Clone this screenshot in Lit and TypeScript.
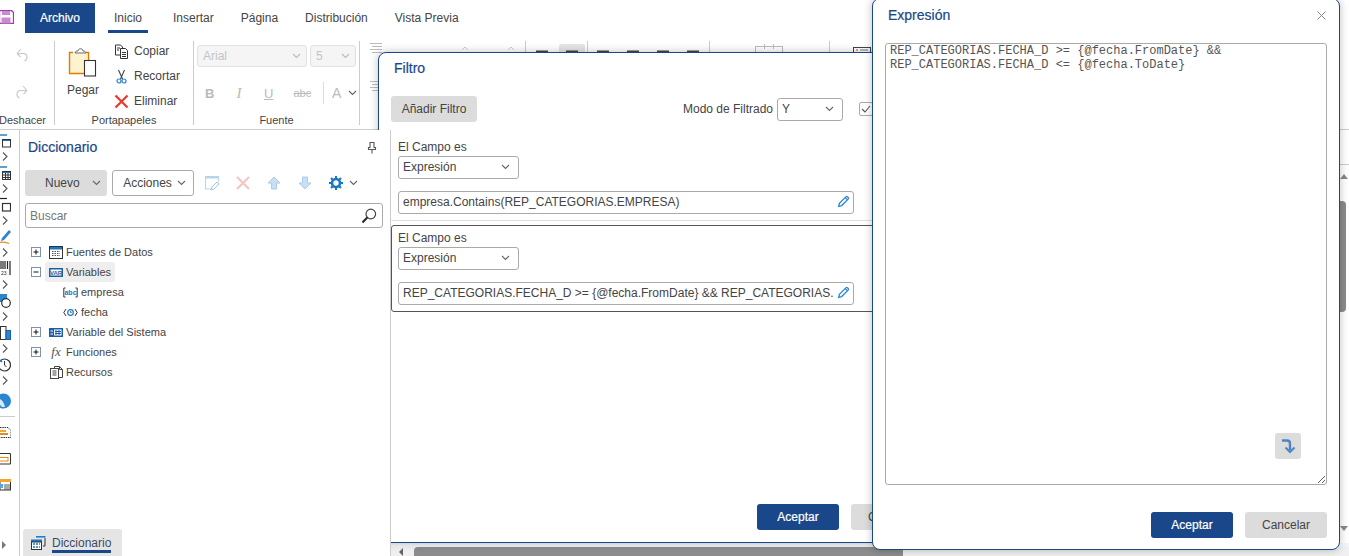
import { LitElement, html, css, svg } from "lit";
import { customElement } from "lit/decorators.js";

const chev = html`<svg class="chev" width="9" height="6" viewBox="0 0 9 6"><path d="M1 1l3.5 3.5L8 1" fill="none" stroke="#666" stroke-width="1.1"/></svg>`;
const pencil = html`<svg class="pencil" width="13" height="13" viewBox="0 0 15 15"><path d="M2 13l.8-3.4 7.4-7.4c.6-.6 1.4-.6 2 0l.6.6c.6.6.6 1.4 0 2l-7.4 7.4z" fill="none" stroke="#2b85cf" stroke-width="1.5"/><path d="M9.4 3l2.6 2.6" stroke="#2b85cf" stroke-width="1.3"/></svg>`;

const stripIcons = [
  svg`<path d="M5 3h7" stroke="#1a76c4" stroke-width="1.4"/><rect x="7" y="7" width="9" height="2" fill="#1a76c4"/><rect x="7.500" y="7.500" width="8" height="7.500" fill="none" stroke="#333"/>`,
  svg`<path d="M5 3h7" stroke="#1a76c4" stroke-width="1.4"/><rect x="7" y="7" width="9" height="2" fill="#1a76c4"/><rect x="7.500" y="7.500" width="8" height="8" fill="none" stroke="#333"/><path d="M7 11h9M7 13.500h9M10.500 9v7M13 9v7" stroke="#333"/>`,
  svg`<path d="M5 2.500h7" stroke="#222" stroke-width="1.2"/><rect x="7.500" y="7.500" width="8" height="7.500" fill="none" stroke="#333" stroke-width="1.2"/>`,
  svg`<path d="M6 13l1-3 7-8 2 2-7 8z" fill="#2b85cf"/><path d="M2 15.500c3-2 6-2 12 0" fill="none" stroke="#e88a1a" stroke-width="1.1"/>`,
  svg`<path d="M6 1v8M8 1v8M10 1v8M12.500 1v8M15 1v14" stroke="#222" stroke-width="1.200"/><text x="6" y="15" font-size="5" font-family="Liberation Sans" fill="#222">23</text>`,
  svg`<rect x="5" y="2" width="7" height="8" fill="#2b85cf"/><circle cx="11" cy="11" r="4.300" fill="#fff" stroke="#333" stroke-width="1.200"/>`,
  svg`<rect x="5.500" y="2.500" width="5.500" height="13" fill="#fff" stroke="#333"/><rect x="11" y="6.500" width="4.500" height="9" fill="#2b85cf" stroke="#1a5f9e"/>`,
  svg`<circle cx="9.500" cy="9" r="6" fill="#fff" stroke="#333" stroke-width="1.200"/><path d="M9.500 5v4l2 2" fill="none" stroke="#333"/><path d="M5 4l2 2" stroke="#1a76c4" stroke-width="1.500"/>`,
  svg`<circle cx="8.500" cy="13" r="7.500" fill="#2b85cf"/><path d="M3 10c3 1 6 4 7 9H7c-2-2-5-5-4-9z" fill="#d7e8f6"/>`,
];
const lowerIcons = [
  svg`<path d="M5 1.500h8l3 3v7H5" fill="#fff" stroke="#333" stroke-dasharray="1.500 .8"/><rect x="4" y="4" width="7" height="2" fill="#f4a52c"/><rect x="4" y="7" width="9" height="2" fill="#e88a1a"/>`,
  svg`<path d="M5 1.500h10.500v10.500H5" fill="#fff" stroke="#333"/><rect x="4" y="5.500" width="9" height="3.500" fill="#fff" stroke="#ee8a11"/>`,
  svg`<rect x="5" y="1.500" width="10.500" height="10.500" fill="#fff" stroke="#333"/><rect x="4" y="1" width="12" height="3" fill="#f4a52c"/><rect x="4" y="6" width="4" height="4" fill="#5aa6dd"/><path d="M9 7h6M9 9h6M9 11h6" stroke="#555"/>`,
];

const varIcon = html`<svg width="14" height="9" viewBox="0 0 14 9"><rect width="14" height="9" fill="#1a5fa8"/><rect x="1.500" y="1.500" width="11" height="6" fill="#fff"/><text x="7" y="7" text-anchor="middle" font-size="6" font-weight="700" font-family="Liberation Sans" fill="#1a5fa8">VAR</text></svg>`;

@customElement("app-root")
export class AppRoot extends LitElement {
  static styles = css`
    :host { display: block; position: relative; width: 1349px; height: 556px; overflow: hidden; background: #fff;
      font-family: "Liberation Sans", Arial, sans-serif; font-size: 12px; color: #444; }
    svg { display: block; flex: none; }
    .page { display: flex; flex-direction: column; height: 556px; }
    .tabs { display: flex; align-items: flex-start; height: 33px; flex: none; padding-top: 3px; box-sizing: border-box; }
    .save { margin: 7px 11px 0 -2px; }
    .archivo { width: 70px; height: 30px; background: #19478a; color: #fff; display: flex; align-items: center; justify-content: center; -webkit-text-stroke: .2px #fff; }
    .tab { height: 30px; box-sizing: border-box; padding: 0 6px; line-height: 30px; border-bottom: 3px solid transparent; margin-left: 15px; white-space: nowrap; }
    .tab.on { border-bottom-color: #19478a; margin-left: 13px; }
    .tab.ins { margin-left: 19px; }
    .ribbon { height: 97px; flex: none; box-sizing: border-box; border-bottom: 1px solid #ccc; display: flex; padding-top: 8px; position: relative; }
    .group { box-sizing: border-box; height: 84px; border-right: 1px solid #ccc; display: flex; flex-direction: column; position: relative; flex: none; }
    .group-body { height: 76px; display: flex; flex: none; }
    .group-label { text-align: center; line-height: 14px; height: 14px; margin-top: -4px; white-space: nowrap; font-size: 11px; }
    .g1 { width: 55px; }
    .g1 .group-body { flex-direction: column; align-items: center; gap: 22px; padding-top: 6px; box-sizing: border-box; margin-left: -10px; }
    .g1 .group-label { margin-left: -10px; width: 65px; }
    .g2 { width: 139px; }
    .g2 .group-body { padding-left: 12px; }
    .paste { width: 32px; display: flex; flex-direction: column; align-items: center; padding-top: 4px; }
    .paste span { margin-top: 6px; line-height: 14px; }
    .small { margin-left: 15px; display: flex; flex-direction: column; gap: 9px; padding-top: 2px; }
    .small div { display: flex; align-items: center; gap: 5px; height: 16px; }
    .g3 { width: 166px; }
    .g3 .group-body { flex-direction: column; }
    .fontrow { display: flex; gap: 3px; padding-left: 3px; margin-top: 4px; }
    .dis { height: 22px; box-sizing: border-box; background: #f5f5f5; border: 1px solid #e2e2e2; border-radius: 3px; display: flex; align-items: center; justify-content: space-between; padding: 0 5px; color: #c4c4c4; }
    .dis.wide { width: 110px; }
    .dis.narrow { width: 46px; }
    .dis .chev path { stroke: #bbb; }
    .fmt { display: flex; align-items: center; height: 22px; margin-top: 15px; padding-left: 11px; color: #bbb; font-size: 13px; position: relative; }
    .fmt span { width: 29.500px; }
    .fmt .b { font-weight: 700; }
    .fmt .i { font-style: italic; font-family: "Liberation Serif", serif; font-size: 15px; padding-left: 2px; box-sizing: border-box; }
    .fmt .u { text-decoration: underline; }
    .fmt .abc { text-decoration: line-through; font-size: 11px; }
    .fmt .rule { width: 1px; height: 22px; background: #ddd; margin: 0 8px 0 0; }
    .fmt .a { width: 16px; font-size: 14px; }
    .peek { margin-top: -8px; flex: none; }
    .main { flex: 1; display: flex; min-height: 0; }
    .strip { width: 20px; flex: none; box-sizing: border-box; border-right: 1px solid #ccc; padding-top: 2px; display: flex; flex-direction: column; overflow: hidden; }
    .strip-item { height: 32px; flex: none; display: flex; flex-direction: column; margin-left: -5px; }
    .strip-item .arrow { margin: 4px 0 0 7px; }
    .strip-item.last { height: 28px; }
    .strip-rule { height: 1px; background: #ccc; flex: none; width: 15px; margin-bottom: 9px; }
    .strip-low { height: 26px; flex: none; margin-left: -5px; }
    .tri { margin: auto 0 7px 2px; width: 0; height: 0; border-left: 4px solid #777; border-top: 4px solid transparent; border-bottom: 4px solid transparent; }
    .panel { width: 371px; flex: none; box-sizing: border-box; border-right: 1px solid #ccc; background: #fff; display: flex; flex-direction: column; position: relative; z-index: 2; padding-left: 5px; }
    .panel-head { height: 34px; flex: none; display: flex; align-items: center; justify-content: space-between; padding: 0 13px 0 3px; }
    .title { font-size: 14px; color: #19478a; -webkit-text-stroke: .2px #19478a; white-space: nowrap; }
    .tools { margin-top: 6px; display: flex; align-items: center; height: 26px; flex: none; }
    .btn { height: 26px; box-sizing: border-box; border-radius: 3px; display: flex; align-items: center; justify-content: center; white-space: nowrap; flex: none; }
    .btn.gray { background: #dcdcdc; color: #444; }
    .btn.blue { background: #19478a; color: #fff; -webkit-text-stroke: .2px #fff; }
    .btn.act { width: 82px; }
    .nuevo { width: 82px; background: #dcdcdc; gap: 12px; padding-left: 20px; justify-content: flex-start; }
    .acciones { width: 82px; border: 1px solid #aaa; margin-left: 5px; gap: 5px; background: #fff; padding-left: 3px; }
    .tool { margin-left: 10px; }
    .tool-x { margin-left: 16px; }
    .tool-a { margin-left: 17px; }
    .tool-c { margin-left: 6px; }
    .search { margin-top: 7px; width: 358px; height: 25px; box-sizing: border-box; flex: none; border: 1px solid #aaa; border-radius: 3px; display: flex; align-items: center; justify-content: space-between; padding: 0 5px 0 4px; color: #777; }
    .tree { margin: 14px 0 0 -5px; flex: none; }
    .row { height: 20px; display: flex; align-items: center; padding-left: 11px; font-size: 11px; }
    .tog { width: 14px; flex: none; }
    .node { display: flex; align-items: center; gap: 3px; height: 20px; padding: 0 4px; border-radius: 3px; white-space: nowrap; }
    .node.sel { background: #eee; }
    .node .ic { width: 14px; display: flex; justify-content: center; flex: none; }
    .row.sub { padding-left: 39px; }
    .row.sub .ic { width: 15px; }
    .row.none { padding-left: 25px; }
    .fx { font-family: "Liberation Serif", serif; font-style: italic; font-size: 13px; color: #555; }
    .foot-tab { margin: auto 0 0 -2px; width: 99px; height: 27px; box-sizing: border-box; flex: none; background: #e5e5e5; border-radius: 3px 3px 0 0; display: flex; align-items: flex-start; padding: 7px 0 0 8px; gap: 6px; }
    .foot-tab span { border-bottom: 3px solid #19478a; height: 14px; line-height: 14px; white-space: nowrap; color: #3a4a66; }
    .canvas { flex: 1; display: flex; flex-direction: column; justify-content: flex-end; min-width: 0; }
    .ruler { height: 4px; flex: none; background: #f2f6fb; }
    .hbar { height: 9px; flex: none; background: #f0f0f0; display: flex; align-items: center; padding-left: 8px; gap: 11px; }
    .hbar i { width: 0; height: 0; border-right: 4px solid #666; border-top: 4px solid transparent; border-bottom: 4px solid transparent; }
    .hbar b { width: 489px; height: 9px; border-radius: 4px 4px 0 0; background: #8c8c8c; }
    .vbar { position: absolute; left: 1340px; top: 129px; width: 9px; height: 427px; }
    .vbar .l1, .vbar .l2 { height: 1px; background: #ccc; }
    .vbar .l1 { margin-bottom: 34px; }
    .vbar .up { margin: 9px 0 0 0; width: 0; height: 0; border-left: 4px solid transparent; border-right: 4px solid transparent; border-bottom: 5px solid #888; }
    .vbar .thumb { margin-top: 22px; width: 6px; height: 111px; background: #8c8c8c; border-radius: 0 4px 4px 0; }
    .vbar .down { margin-top: 214px; width: 0; height: 0; border-left: 4px solid transparent; border-right: 4px solid transparent; border-top: 5px solid #888; }
    .dialog { position: absolute; box-sizing: border-box; background: #fff; border: 1px solid #19478a; border-radius: 8px; box-shadow: 0 0 8px rgba(0,0,0,.25); display: flex; flex-direction: column; }
    .filter { left: 378px; top: 52px; width: 568px; height: 491px; z-index: 1; }
    .expr { left: 872px; top: -2px; width: 468px; height: 552px; z-index: 3; padding: 0 12px; }
    .dlg-title { height: 29px; flex: none; display: flex; align-items: center; padding-left: 15px; box-sizing: border-box; }
    .expr .dlg-title { justify-content: space-between; padding: 0 1px 12px 3px; height: 44px; }
    .f-tools { margin: 14px 0 0 12px; display: flex; align-items: center; height: 26px; flex: none; }
    .f-tools .add { width: 86px; }
    .f-tools .lbl { margin-left: 206px; white-space: nowrap; }
    .sel-box { box-sizing: border-box; height: 23px; border: 1px solid #aaa; border-radius: 3px; display: flex; align-items: center; justify-content: space-between; padding: 0 8px 0 4px; background: #fff; flex: none; }
    .f-tools .sel-box { width: 66px; margin-left: 4px; }
    .check { margin-left: 16px; width: 14px; height: 14px; box-sizing: border-box; border: 1px solid #aaa; border-radius: 2px; flex: none; }
    .rows { margin: 12px 0 0 12px; display: flex; flex-direction: column; gap: 4px; flex: none; }
    .f-row { height: 87px; box-sizing: border-box; border: 1px solid transparent; border-bottom-color: #ddd; padding: 5px 6px 6px; }
    .f-row.cur { border-color: #555; border-radius: 3px; }
    .f-lbl { height: 14px; line-height: 14px; margin-bottom: 2px; }
    .f-row .sel-box { width: 121px; padding-bottom: 2px; }
    .f-in { margin-top: 12px; width: 456px; height: 23px; box-sizing: border-box; border: 1px solid #aaa; border-radius: 3px; display: flex; align-items: center; justify-content: space-between; padding: 0 3px 2px 4px; white-space: nowrap; overflow: hidden; }
    .f-in span { display: block; width: 431px; overflow: hidden; }
    .foot { margin-top: auto; display: flex; justify-content: flex-end; gap: 12px; padding-bottom: 12px; flex: none; }
    .filter .foot { padding-right: 12px; }
    .expr .foot { padding-bottom: 11px; }
    textarea { display: block; flex: none; width: 442px; height: 442px; box-sizing: border-box; border: 1px solid #aaa; border-radius: 3px; padding: 0 4px; margin: 0; font-family: "Liberation Mono", "Courier New", monospace; font-size: 12px; color: #555; outline: none; background: #fff; }
    .wrap-btn { position: absolute; left: 402px; top: 434px; width: 26px; height: 26px; background: #dcdcdc; border-radius: 3px; display: flex; align-items: center; justify-content: center; }
  `;

  render() {
    return html`
      <div class="page">
        <div class="tabs">
          <svg class="save" width="16" height="14" viewBox="0 0 16 14"><path d="M1.500 .500h12l2 2v11h-14z" fill="#fff" stroke="#9a3fa8" stroke-width="1.300"/><rect x="4" y="1" width="8" height="4" fill="#c98ad2"/><rect x="3.500" y="7.500" width="9" height="6" fill="#c98ad2"/></svg>
          <div class="archivo">Archivo</div>
          <div class="tab on">Inicio</div>
          <div class="tab ins">Insertar</div>
          <div class="tab">Página</div>
          <div class="tab">Distribución</div>
          <div class="tab">Vista Previa</div>
        </div>
        <div class="ribbon">
          <div class="group g1">
            <div class="group-body">
              <svg width="14" height="15" viewBox="0 0 14 15"><path d="M2 6.500h6.500c4 0 5 5.500 1 7.500M2 6.500l4-4.500M2 6.500l3.500 3.500" fill="none" stroke="#c8c8c8" stroke-width="1.100"/></svg>
              <svg width="14" height="15" viewBox="0 0 14 15"><path d="M12 6.500h-6.500c-4 0-5 5.500-1 7.500M12 6.500l-4-4.500M12 6.500l-3.500 3.500" fill="none" stroke="#c8c8c8" stroke-width="1.100"/></svg>
            </div>
            <div class="group-label">Deshacer</div>
          </div>
          <div class="group g2">
            <div class="group-body">
              <div class="paste">
                <svg width="30" height="32" viewBox="0 0 30 32"><path d="M5 7.500H1.500v21h19V24" fill="#fff3cf" stroke="#e07b00" stroke-width="1.400"/><rect x="3" y="9" width="16" height="18" fill="#fff3cf"/><path d="M18 7.500h2.500V15" fill="none" stroke="#e07b00" stroke-width="1.400"/><path d="M7 8c0-2 2-2 3-2 0-3 5-3 5 0 2 0 3 1 3 2z" fill="#fff" stroke="#666"/><rect x="16.500" y="15.500" width="11" height="15.500" fill="#fff" stroke="#333" stroke-width="1.100"/></svg>
                <span>Pegar</span>
              </div>
              <div class="small">
                <div><svg width="15" height="15" viewBox="0 0 15 15"><path d="M1.500 1h5l2 2v8h-7z" fill="#fff" stroke="#333"/><path d="M6.500 4.500h5l2 2v8h-7z" fill="#fff" stroke="#333"/><path d="M3 4h3M3 6h2M8 8.500h4M8 10.500h4M8 12.500h4" stroke="#333"/></svg>Copiar</div>
                <div><svg width="15" height="15" viewBox="0 0 15 15"><path d="M4.500 1l4 9M10.500 1l-4 9" stroke="#444" stroke-width="1.100"/><circle cx="5" cy="12" r="2" fill="none" stroke="#2b85cf" stroke-width="1.200"/><circle cx="10" cy="12" r="2" fill="none" stroke="#2b85cf" stroke-width="1.200"/></svg>Recortar</div>
                <div><svg width="15" height="15" viewBox="0 0 15 15"><path d="M1.500 1.500l12 12M13.500 1.500l-12 12" stroke="#e8392c" stroke-width="2.200"/></svg>Eliminar</div>
              </div>
            </div>
            <div class="group-label">Portapapeles</div>
          </div>
          <div class="group g3">
            <div class="group-body">
              <div class="fontrow">
                <div class="dis wide">Arial${chev}</div>
                <div class="dis narrow">5${chev}</div>
              </div>
              <div class="fmt">
                <span class="b">B</span><span class="i">I</span><span class="u">U</span><span class="abc">abc</span>
                <span class="rule"></span><span class="a">A</span>${chev}
              </div>
            </div>
            <div class="group-label">Fuente</div>
          </div>
          <svg class="peek" width="513" height="60" viewBox="0 0 513 60">
            <path d="M10 10.500h12M12 13.500h10M10 16.500h12M12 19.500h10M10 48.500h12M12 51.500h10M10 54.500h12M12 57.500h10" stroke="#bbb"/>
            <path d="M102 17l3-3 3 3M148 17l3-3 3 3" fill="none" stroke="#ccc"/>
            <path d="M165.500 8v44M227.500 8v44M349.500 8v44M469.500 8v44" stroke="#ccc"/>
            <rect x="199" y="11" width="26" height="10" rx="2" fill="#e5e5e5"/>
            <path d="M176 18.500h12M206 18.500h12M237 18.500h12M267 18.500h12M297 18.500h12M327 18.500h12" stroke="#444" stroke-width="2"/>
            <rect x="395.500" y="13.500" width="27" height="10" fill="none" stroke="#bbb"/>
            <path d="M404.500 11v5M413.500 11v5" stroke="#bbb"/>
            <rect x="493.500" y="14.500" width="17" height="8" fill="#fff" stroke="#444"/>
            <path d="M496 17h2" stroke="#e8392c"/><path d="M500 17h8" stroke="#777"/>
          </svg>
        </div>
        <div class="main">
          <div class="strip">
            ${stripIcons.map((ic, i) => html`
              <div class="strip-item ${i === 8 ? "last" : ""}">
                <svg width="16" height="${i === 8 ? 22 : 16}" viewBox="0 0 16 ${i === 8 ? 22 : 16}">${ic}</svg>
                ${i < 8 ? html`<svg class="arrow" width="6" height="9" viewBox="0 0 6 9"><path d="M1 .5l4 4-4 4" fill="none" stroke="#555" stroke-width="1.100"/></svg>` : ""}
              </div>`)}
            <div class="strip-rule"></div>
            ${lowerIcons.map((ic) => html`<div class="strip-low"><svg width="16" height="14" viewBox="0 0 16 14">${ic}</svg></div>`)}
            <div class="tri"></div>
          </div>
          <div class="panel">
            <div class="panel-head">
              <span class="title">Diccionario</span>
              <svg width="10" height="13" viewBox="0 0 10 13"><path d="M3 1.500h4v5h1.500v2h-7v-2H3zM5 8.500V12.500" fill="none" stroke="#555" stroke-width="1.100"/></svg>
            </div>
            <div class="tools">
              <div class="btn nuevo"><span>Nuevo</span>${chev}</div>
              <div class="btn acciones"><span>Acciones</span>${chev}</div>
              <svg class="tool" width="16" height="16" viewBox="0 0 16 16"><path d="M1.500 14V1.500h13v5M1.500 14h6" fill="none" stroke="#b8d4ec"/><path d="M1 1h14v2.500H1z" fill="#b8d4ec"/><path d="M7 15l1-3 5-5 2 2-5 5z" fill="#fff" stroke="#9cc4e6"/></svg>
              <svg class="tool-x" width="14" height="14" viewBox="0 0 14 14"><path d="M1 1l12 12M13 1L1 13" stroke="#f7c4c4" stroke-width="2.200"/></svg>
              <svg class="tool-a" width="14" height="14" viewBox="0 0 14 14"><path d="M7 1l6 6H9.500v6h-5V7H1z" fill="#c9e0f4" stroke="#a9cdea"/></svg>
              <svg class="tool-a" width="14" height="14" viewBox="0 0 14 14"><path d="M7 13l6-6H9.500V1h-5v6H1z" fill="#c9e0f4" stroke="#a9cdea"/></svg>
              <svg class="tool-a" width="14" height="14" viewBox="0 0 14 14"><circle cx="7" cy="7" r="4" fill="none" stroke="#1a76c4" stroke-width="2.600"/><path d="M7 0v3M7 11v3M0 7h3M11 7h3M2 2l2 2M10 10l2 2M12 2l-2 2M4 10l-2 2" stroke="#1a76c4" stroke-width="2"/></svg>
              <span class="tool-c">${chev}</span>
            </div>
            <div class="search">
              <span>Buscar</span>
              <svg width="16" height="16" viewBox="0 0 16 16"><circle cx="9.800" cy="6" r="4.800" fill="none" stroke="#444" stroke-width="1.200"/><path d="M6.300 9.500l-4.800 5" stroke="#222" stroke-width="2"/></svg>
            </div>
            <div class="tree">
              <div class="row">
                <span class="tog">${this.box(true)}</span>
                <div class="node"><span class="ic"><svg width="14" height="13" viewBox="0 0 14 13"><rect x=".5" y=".5" width="13" height="12" fill="#fff" stroke="#333"/><rect x="1" y="1" width="12" height="2.500" fill="#1a76c4"/><path d="M3 5.500h8M3 7.500h8M3 9.500h8" stroke="#555" stroke-dasharray="1.500 1"/></svg></span>Fuentes de Datos</div>
              </div>
              <div class="row">
                <span class="tog">${this.box(false)}</span>
                <div class="node sel"><span class="ic">${varIcon}</span>Variables</div>
              </div>
              <div class="row sub"><div class="node"><span class="ic"><svg width="15" height="11" viewBox="0 0 15 11"><path d="M2.500 1H.8v9h1.700M12.500 1h1.700v9h-1.700" fill="none" stroke="#333"/><text x="7.500" y="8" text-anchor="middle" font-size="7" font-weight="700" font-family="Liberation Sans" fill="#1a76c4">abc</text></svg></span>empresa</div></div>
              <div class="row sub"><div class="node"><span class="ic"><svg width="15" height="11" viewBox="0 0 15 11"><path d="M3 2L.8 5.500 3 9M12 2l2.200 3.500L12 9" fill="none" stroke="#333"/><circle cx="7.500" cy="5.500" r="2.800" fill="none" stroke="#1a76c4" stroke-width="1.200"/><path d="M7.500 4v1.500h1.200" fill="none" stroke="#1a76c4"/></svg></span>fecha</div></div>
              <div class="row">
                <span class="tog">${this.box(true)}</span>
                <div class="node"><span class="ic"><svg width="14" height="9" viewBox="0 0 14 9"><rect width="14" height="9" fill="#1a5fa8"/><rect x="5" y="1.500" width="7.500" height="6" fill="#fff"/><path d="M1.500 3h2.500M1.500 6h2.500" stroke="#fff"/><path d="M7 2v5M10 2v5M6 3.500h6M6 5.500h6" stroke="#1a5fa8"/></svg></span>Variable del Sistema</div>
              </div>
              <div class="row">
                <span class="tog">${this.box(true)}</span>
                <div class="node"><span class="ic fx">fx</span>Funciones</div>
              </div>
              <div class="row none"><div class="node"><span class="ic"><svg width="13" height="14" viewBox="0 0 13 14"><path d="M4.500 1.500h5l3 3v8h-8z" fill="#fff" stroke="#444"/><path d="M9.500 1.500v3h3" fill="none" stroke="#444"/><rect x=".5" y="3.500" width="8" height="10" fill="#fff" stroke="#444"/><path d="M2.500 6h4M2.500 8h4M2.500 10h4" stroke="#444"/></svg></span>Recursos</div></div>
            </div>
            <div class="foot-tab">
              <svg width="15" height="14" viewBox="0 0 15 14"><path d="M5 .8h9.500" stroke="#1a76c4" stroke-width="1.500"/><path d="M14 2v8h-2" fill="none" stroke="#333"/><rect x="0" y="3.500" width="11" height="2.500" fill="#1a76c4"/><rect x=".5" y="6" width="10" height="7.500" fill="#fff" stroke="#333"/><path d="M2 8h2M5 8h2M8 8h1M2 11h2M5 11h2M8 11h1" stroke="#1a76c4" stroke-width="1.600"/></svg>
              <span>Diccionario</span>
            </div>
          </div>
          <div class="canvas">
            <div class="ruler"></div>
            <div class="hbar"><i></i><b></b></div>
          </div>
        </div>
      </div>

      <div class="vbar">
        <div class="l1"></div><div class="l2"></div>
        <div class="up"></div><div class="thumb"></div><div class="down"></div>
      </div>

      <div class="dialog filter">
        <div class="dlg-title"><span class="title">Filtro</span></div>
        <div class="f-tools">
          <div class="btn gray add">Añadir Filtro</div>
          <span class="lbl">Modo de Filtrado</span>
          <div class="sel-box"><span>Y</span>${chev}</div>
          <div class="check"><svg width="12" height="12" viewBox="0 0 12 12"><path d="M2 6l3 3 5-6" fill="none" stroke="#555" stroke-width="1.100"/></svg></div>
        </div>
        <div class="rows">
          ${this.filterRow(false, "empresa.Contains(REP_CATEGORIAS.EMPRESA)")}
          ${this.filterRow(true, "REP_CATEGORIAS.FECHA_D >= {@fecha.FromDate} && REP_CATEGORIAS.FECHA_D <= {@fecha.ToDate}")}
        </div>
        <div class="foot">
          <div class="btn blue act">Aceptar</div>
          <div class="btn gray act">Cancelar</div>
        </div>
      </div>

      <div class="dialog expr">
        <div class="dlg-title">
          <span class="title">Expresión</span>
          <svg width="9" height="9" viewBox="0 0 9 9"><path d="M.5.500l8 8M8.500.500l-8 8" stroke="#888" stroke-width="1"/></svg>
        </div>
        <textarea readonly spellcheck="false">REP_CATEGORIAS.FECHA_D >= {@fecha.FromDate} && REP_CATEGORIAS.FECHA_D <= {@fecha.ToDate}</textarea>
        <div class="wrap-btn"><svg width="16" height="16" viewBox="0 0 16 16"><path d="M2 2.500h5c2.500 0 3 1.500 3 3V12" fill="none" stroke="#4a86c0" stroke-width="2.400"/><path d="M5.500 9.500L10 14l4.500-4.500" fill="none" stroke="#4a86c0" stroke-width="2"/></svg></div>
        <div class="foot">
          <div class="btn blue act">Aceptar</div>
          <div class="btn gray act">Cancelar</div>
        </div>
      </div>
    `;
  }

  box(plus: boolean) {
    return html`<svg width="10" height="10" viewBox="0 0 10 10"><rect x=".5" y=".5" width="9" height="9" fill="#fff" stroke="#7d93ad"/><path d="M2.500 5h5" stroke="#111"/>${plus ? svg`<path d="M5 2.500v5" stroke="#111"/>` : ""}</svg>`;
  }

  filterRow(cur: boolean, text: string) {
    return html`
      <div class="f-row ${cur ? "cur" : ""}">
        <div class="f-lbl">El Campo es</div>
        <div class="sel-box"><span>Expresión</span>${chev}</div>
        <div class="f-in"><span>${text}</span>${pencil}</div>
      </div>`;
  }
}
